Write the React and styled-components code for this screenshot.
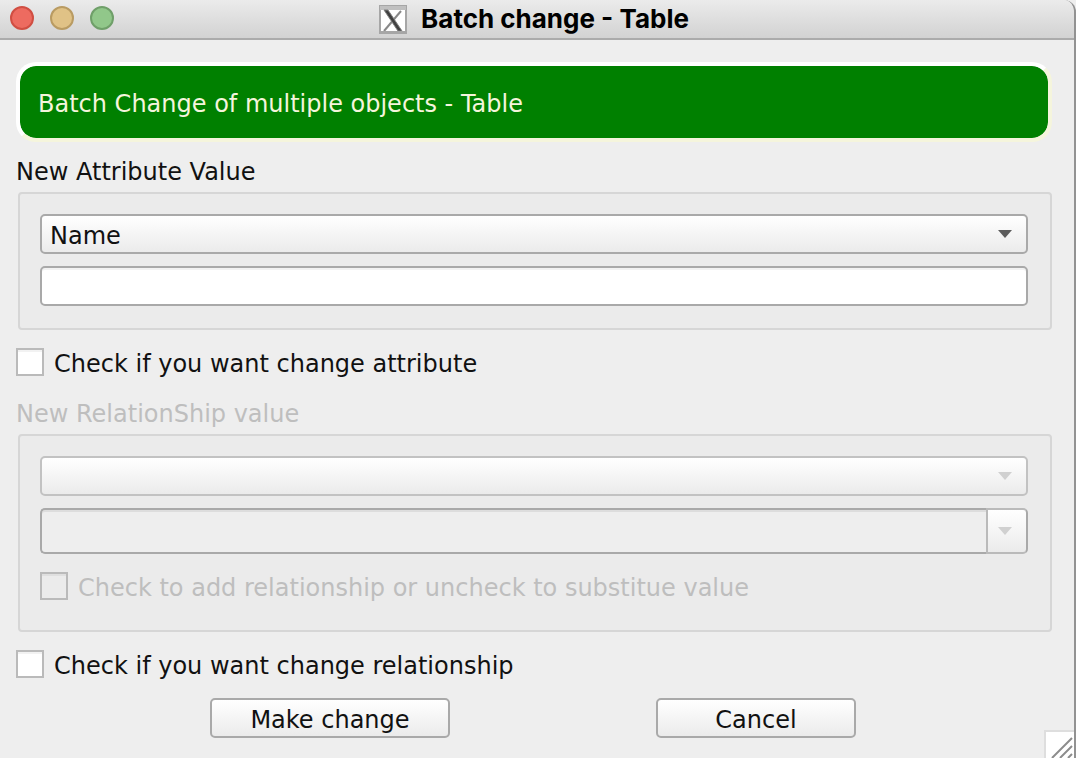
import React from "react";
import styled, { createGlobalStyle } from "styled-components";

const GlobalStyle = createGlobalStyle`
  *, *::before, *::after { box-sizing: border-box; }
  body { margin: 0; background: #eeeeee; }
`;

const Window = styled.div`
  position: relative;
  display: flex;
  flex-direction: column;
  min-height: 100vh;
  overflow: hidden;
  border-right: 2px solid #929292;
  border-top-right-radius: 12px;
  background: #eeeeee;
  color: #111111;
  font: 24px/28px "DejaVu Sans", sans-serif;
`;

const TitleBar = styled.header`
  display: flex;
  align-items: center;
  justify-content: center;
  height: 40px;
  padding-right: 6px;
  border-bottom: 2px solid #ababab;
  background: linear-gradient(#ebebeb, #d2d2d2);
`;

const Lights = styled.div`
  position: absolute;
  top: 6px;
  left: 10px;
  display: flex;
  gap: 16px;
`;

const Light = styled.button`
  width: 24px;
  height: 24px;
  padding: 0;
  border: 2px solid ${(p) => p.$edge};
  border-radius: 50%;
  background: ${(p) => p.$fill};
`;

const Title = styled.h1`
  display: flex;
  align-items: center;
  gap: 14px;
  margin: 0;
  color: #000000;
  font: 700 26px/30px Inter, sans-serif;
`;

const Content = styled.form`
  display: flex;
  flex-direction: column;
  padding: 22px 22px 20px 16px;
`;

const Banner = styled.h2`
  margin: 0 0 16px;
  padding: 24px 18px 20px;
  border: 4px solid;
  border-color: #ffffff #f5f5dc #f5f5dc #ffffff;
  border-radius: 20px;
  background: #008000;
  background-clip: padding-box;
  color: #f5f5dc;
  font: inherit;
`;

const Group = styled.fieldset`
  display: flex;
  flex-direction: column;
  min-width: 0;
  margin: 0;
  padding: 0;
  border: 0;
  color: ${(p) => (p.disabled ? "#bebebe" : "inherit")};
`;

const Legend = styled.legend`
  margin-bottom: 6px;
  padding: 0;
`;

const Panel = styled.div`
  display: flex;
  flex-direction: column;
  gap: 12px;
  margin-left: 2px;
  padding: 20px 22px 22px 20px;
  border: 2px solid #d6d6d6;
  border-radius: 4px;
  background: #ebebeb;
`;

const SelectBox = styled.div`
  position: relative;
  display: grid;
`;

const Select = styled.select`
  appearance: none;
  height: 40px;
  padding: 4px 40px 0 8px;
  border: 2px solid #a9a9a9;
  border-radius: 5px;
  background: linear-gradient(#ffffff, #ebebeb);
  color: inherit;
  font: inherit;
  opacity: 1;
  &:disabled { border-color: #c2c2c2; }
`;

const SelectArrow = styled.span`
  position: absolute;
  top: 0;
  right: 16px;
  bottom: 0;
  display: flex;
  align-items: center;
  pointer-events: none;
`;

const TextInput = styled.input`
  height: 40px;
  padding: 0 8px;
  border: 2px solid #a9a9a9;
  border-radius: 5px;
  background: #ffffff;
  box-shadow: inset 0 2px #f2f2f2;
  color: inherit;
  font: inherit;
`;

const Combo = styled.div`
  display: flex;
  height: 46px;
`;

const ComboInput = styled(TextInput)`
  flex: 1;
  min-width: 0;
  height: 46px;
  border-right: 0;
  border-radius: 5px 0 0 5px;
  background: #eeeeee;
  box-shadow: inset 0 2px #dddddd;
`;

const ComboButton = styled.button`
  display: flex;
  align-items: center;
  justify-content: center;
  width: 42px;
  padding: 0 4px 0 0;
  border: 2px solid #bababa;
  border-right-color: #a9a9a9;
  border-radius: 0 5px 5px 0;
  background: linear-gradient(#ffffff, #ebebeb);
`;

const CheckRow = styled.label`
  display: flex;
  align-items: center;
  gap: 10px;
  margin: ${(p) => (p.$inner ? "4px 0 6px" : "16px 0 0")};
`;

const Caption = styled.span`
  padding-top: 4px;
`;

const CheckBox = styled.input`
  appearance: none;
  flex: none;
  width: 28px;
  height: 28px;
  margin: 0;
  border: 2px solid #bababa;
  background: #ffffff;
  box-shadow: inset 0 2px #f2f2f2;
  &:disabled { background: #ebebeb; box-shadow: inset 0 2px #dfdfdf; }
`;

const Section = styled.section`
  margin-bottom: ${(p) => (p.$last ? "18px" : "22px")};
`;

const Actions = styled.div`
  display: flex;
  justify-content: center;
  gap: 206px;
  padding-right: 2px;
`;

const Button = styled.button`
  width: ${(p) => (p.$wide ? "240px" : "200px")};
  height: 40px;
  padding: 4px 0 0;
  border: 2px solid #a9a9a9;
  border-radius: 5px;
  background: linear-gradient(#ffffff, #ebebeb);
  color: #111111;
  font: inherit;
`;

const Grip = styled.div`
  position: absolute;
  right: 0;
  bottom: 0;
  display: flex;
  border: solid #dedede;
  border-width: 2px 0 0 2px;
  background: #ffffff;
`;

const Arrow = ({ color }) => (
  <svg width="14" height="8" viewBox="0 0 14 8" aria-hidden="true">
    <path d="M0 0h14L7 8z" fill={color} />
  </svg>
);

const XLogo = () => (
  <svg width="28" height="29" viewBox="0 0 28 29" aria-hidden="true">
    <rect x="1" y="1" width="26" height="27" fill="#ffffff" stroke="#a6a6a6" strokeWidth="2" />
    <path d="M1 3h26" stroke="#c0c0c0" strokeWidth="4" />
    <path d="M22 6L5 26" stroke="#888888" strokeWidth="2" />
    <path d="M5 5h4L23 26h-4z" fill="#404040" stroke="#808080" strokeWidth="1" />
    <path d="M1 27h26" stroke="#a6a6a6" strokeWidth="2" />
  </svg>
);

const CheckOption = ({ children, inner }) => (
  <CheckRow $inner={inner}>
    <CheckBox type="checkbox" />
    <Caption>{children}</Caption>
  </CheckRow>
);

export default function App() {
  return (
    <>
      <GlobalStyle />
      <Window>
        <TitleBar>
          <Lights>
            <Light type="button" aria-label="Close" $fill="#ed6b60" $edge="#d04e42" />
            <Light type="button" aria-label="Minimize" $fill="#e0c286" $edge="#b99b62" />
            <Light type="button" aria-label="Zoom" $fill="#91c78a" $edge="#6f9f69" />
          </Lights>
          <Title>
            <XLogo />
            Batch change - Table
          </Title>
        </TitleBar>
        <Content onSubmit={(e) => e.preventDefault()}>
          <Banner>Batch Change of multiple objects - Table</Banner>
          <Section>
            <Group>
              <Legend>New Attribute Value</Legend>
              <Panel>
                <SelectBox>
                  <Select aria-label="Attribute">
                    <option>Name</option>
                  </Select>
                  <SelectArrow>
                    <Arrow color="#5c5c5c" />
                  </SelectArrow>
                </SelectBox>
                <TextInput type="text" aria-label="Attribute value" />
              </Panel>
            </Group>
            <CheckOption>Check if you want change attribute</CheckOption>
          </Section>
          <Section $last>
            <Group disabled>
              <Legend>New RelationShip value</Legend>
              <Panel>
                <SelectBox>
                  <Select aria-label="Relationship" />
                  <SelectArrow>
                    <Arrow color="#d0d0d0" />
                  </SelectArrow>
                </SelectBox>
                <Combo>
                  <ComboInput type="text" aria-label="Relationship value" />
                  <ComboButton type="button" aria-label="Show values">
                    <Arrow color="#d0d0d0" />
                  </ComboButton>
                </Combo>
                <CheckOption inner>Check to add relationship or uncheck to substitue value</CheckOption>
              </Panel>
            </Group>
            <CheckOption>Check if you want change relationship</CheckOption>
          </Section>
          <Actions>
            <Button type="submit" $wide>Make change</Button>
            <Button type="button">Cancel</Button>
          </Actions>
        </Content>
        <Grip>
          <svg width="28" height="26" viewBox="0 0 28 26" aria-hidden="true">
            <path d="M6 26L26 6M14 26L26 14M22 26L26 22" stroke="#8c8c8c" strokeWidth="2" />
          </svg>
        </Grip>
      </Window>
    </>
  );
}
